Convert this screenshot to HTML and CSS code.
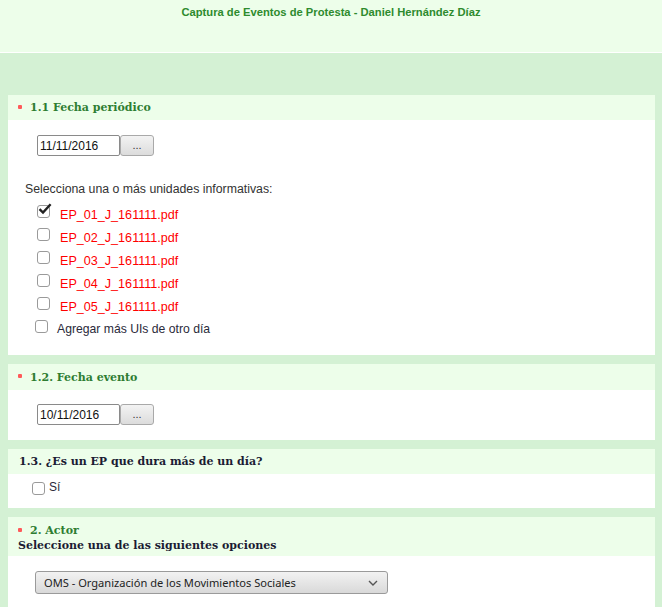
FILE: index.html
```html
<!DOCTYPE html>
<html lang="es">
<head>
<meta charset="utf-8">
<title>Captura de Eventos de Protesta</title>
<link rel="stylesheet" href="styles.css">
</head>
<body>
<header class="top">
  <h1 class="top-title">Captura de Eventos de Protesta - Daniel Hernández Díaz</h1>
</header>
<main class="page">
  <section class="card card-1">
    <div class="card-head"><span class="req"></span><span class="q-title">1.1 Fecha periódico</span></div>
    <div class="card-body">
      <div class="date-row">
        <input class="date-input" type="text" value="11/11/2016"><button class="date-btn" type="button">...</button>
      </div>
      <p class="hint">Selecciona una o más unidades informativas:</p>
      <ul class="files">
        <li class="file"><span class="cb checked"><svg viewBox="0 0 14 12" width="14" height="12"><path d="M1.5 6.2 L5 9.6 L12.6 1.2" fill="none" stroke="#222" stroke-width="2.4"/></svg></span><span class="file-name">EP_01_J_161111.pdf</span></li>
        <li class="file"><span class="cb"></span><span class="file-name">EP_02_J_161111.pdf</span></li>
        <li class="file"><span class="cb"></span><span class="file-name">EP_03_J_161111.pdf</span></li>
        <li class="file"><span class="cb"></span><span class="file-name">EP_04_J_161111.pdf</span></li>
        <li class="file"><span class="cb"></span><span class="file-name">EP_05_J_161111.pdf</span></li>
      </ul>
      <div class="more"><span class="cb"></span><span class="more-label">Agregar más UIs de otro día</span></div>
    </div>
  </section>

  <section class="card card-2">
    <div class="card-head"><span class="req"></span><span class="q-title">1.2. Fecha evento</span></div>
    <div class="card-body">
      <div class="date-row">
        <input class="date-input" type="text" value="10/11/2016"><button class="date-btn" type="button">...</button>
      </div>
    </div>
  </section>

  <section class="card card-3">
    <div class="card-head"><span class="q-title dark">1.3. ¿Es un EP que dura más de un día?</span></div>
    <div class="card-body">
      <div class="si"><span class="cb"></span><span class="si-label">Sí</span></div>
    </div>
  </section>

  <section class="card card-4">
    <div class="card-head two">
      <div><span class="req"></span><span class="q-title">2. Actor</span></div>
      <div class="q-title dark">Seleccione una de las siguientes opciones</div>
    </div>
    <div class="card-body">
      <div class="select">
        <span class="select-text">OMS - Organización de los Movimientos Sociales</span>
        <svg class="chev" viewBox="0 0 10 6" width="10" height="6"><path d="M1 1 L5 5 L9 1" fill="none" stroke="#555" stroke-width="1.4"/></svg>
      </div>
    </div>
  </section>
</main>
</body>
</html>
```

FILE: styles.css
```css
* { box-sizing: border-box; }
html, body { margin: 0; padding: 0; }
body {
  background: #d4f1d4;
  font-family: "Liberation Sans", Arial, sans-serif;
  font-size: 12px;
  color: #333;
  height: 607px;
  overflow: hidden;
}
.top {
  background: #edfeea;
  height: 53px;
  border-bottom: 1px solid #ffffff;
  padding-top: 5px;
}
.top-title {
  margin: 0;
  text-align: center;
  font-size: 11.2px;
  font-weight: bold;
  color: #2e8b2e;
  line-height: 14px;
}
.page {
  padding: 42px 7px 0 8px;
  display: flex;
  flex-direction: column;
  gap: 9px;
}
.card { background: #fff; }
.card-head {
  background: #edfeea;
  height: 25px;
  display: flex;
  align-items: center;
  padding-left: 10px;
}
.card-2 .card-head { height: 26px; }
.card-3 .card-head { padding-left: 11px; }
.card-head.two {
  height: 39px;
  display: block;
  padding: 6px 0 0 10px;
  line-height: 15px;
}
.req {
  display: inline-block;
  width: 4px;
  height: 4px;
  background: #ff5a5a;
  border-radius: 1px;
  margin-right: 8px;
  vertical-align: middle;
  position: relative;
  top: -1px;
}
.q-title {
  font-family: "DejaVu Serif", serif;
  font-weight: bold;
  font-size: 11px;
  color: #2e7d32;
}
.q-title.dark { color: #1b1b33; }
.card-body { padding: 15px 0 0 29px; }
.card-1 .card-body { height: 235px; }
.card-2 .card-body { height: 50px; padding-top: 14px; }
.card-3 .card-body { height: 34px; padding: 6px 0 0 24px; }
.card-4 .card-body { height: 51px; padding: 15px 0 0 27px; }
.date-row { display: flex; height: 21px; }
.date-input {
  width: 83px;
  height: 21px;
  border: 1px solid #8a8a8a;
  border-radius: 2px;
  font-family: "Liberation Sans", Arial, sans-serif;
  font-size: 12px;
  color: #111;
  padding: 0 2px;
  background: #fff;
}
.date-btn {
  width: 34px;
  height: 21px;
  border: 1px solid #a9a9a9;
  border-radius: 3px;
  background: linear-gradient(#f3f3f3, #dcdcdc);
  font-size: 11px;
  color: #333;
  padding: 0 0 2px;
  font-family: "Liberation Sans", Arial, sans-serif;
}
.hint {
  margin: 26px 0 0 -12px;
  line-height: 14px;
  font-size: 12.3px;
}
.files { list-style: none; margin: 7px 0 0; padding: 0; }
.file {
  display: flex;
  align-items: center;
  height: 23px;
  padding-left: 0;
}
.cb {
  display: inline-block;
  width: 13px;
  height: 13px;
  border: 1px solid #9a9a9a;
  border-radius: 3px;
  background: #fff;
  position: relative;
  flex: none;
}
.file .cb { top: -3px; }
.cb.checked svg { position: absolute; left: 0; top: -3px; }
.file-name {
  color: #f00;
  margin-left: 10px;
  font-size: 12.6px;
}
.more {
  display: flex;
  align-items: center;
  margin-left: -2px;
  height: 21px;
}
.more .cb { top: -2px; }
.more-label { margin-left: 9px; color: #2a2a3a; font-size: 12.2px; }
.si { display: flex; align-items: center; }
.si .cb { top: 1px; }
.si-label { margin-left: 4px; color: #2a2a3a; }
.select {
  width: 353px;
  height: 23px;
  border: 1px solid #9a9a9a;
  border-radius: 3px;
  background: linear-gradient(#f2f2f2, #d9d9d9);
  display: flex;
  align-items: center;
  justify-content: space-between;
  padding: 0 9px 0 8px;
}
.select-text {
  font-family: "Noto Sans", sans-serif;
  font-size: 11.1px;
  color: #222;
}
```
